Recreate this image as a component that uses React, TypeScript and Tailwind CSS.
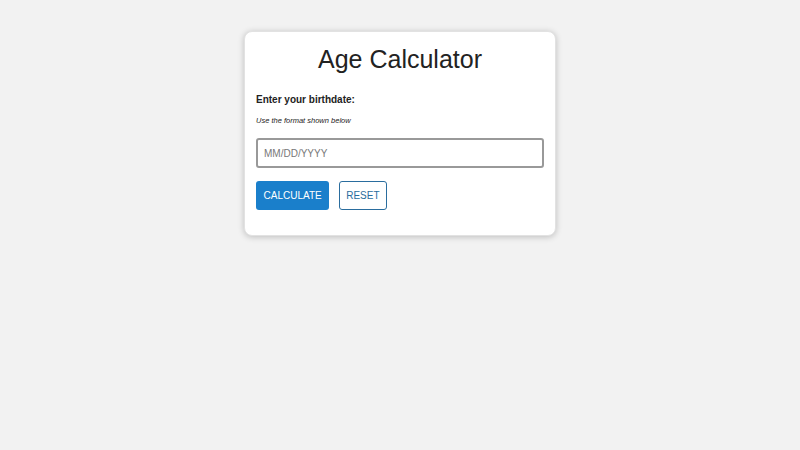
import { useState } from "react";

const App = () => {
  const [birthdate, setBirthdate] = useState("");

  return (
    <div className="min-h-[450px] w-full bg-[#f2f2f2] flex justify-center pt-[31px] font-['Liberation_Sans',Arial,sans-serif] text-[#222]">
      <div className="w-[312px] h-[205px] bg-white rounded-[8px] border border-[#e2e2e2] shadow-[0_1px_6px_rgba(0,0,0,0.22)] px-[11px] pt-[12px]">
        <h1 className="text-center text-[25px] leading-[30px]">Age Calculator</h1>
        <p className="mt-[20px] text-[10px] leading-[12px] font-bold">
          Enter your birthdate:
        </p>
        <p className="mt-[10px] text-[7.5px] leading-[9px] italic">
          Use the format shown below
        </p>
        <input
          type="text"
          value={birthdate}
          onChange={(e) => setBirthdate(e.target.value)}
          placeholder="MM/DD/YYYY"
          className="mt-[13px] block w-full h-[30px] px-[6px] text-[10px] border-2 border-[#999] rounded-[3px] outline-none placeholder:text-[#777]"
        />
        <div className="mt-[13px] flex gap-[10px]">
          <button className="h-[29px] px-[7.5px] bg-[#1a7fcb] text-white text-[10px] rounded-[3px]">
            CALCULATE
          </button>
          <button
            className="h-[29px] px-[6px] bg-white text-[#2a6d9e] text-[10px] border-[1.5px] border-[#2a6d9e] rounded-[3px]"
            onClick={() => setBirthdate("")}
          >
            RESET
          </button>
        </div>
      </div>
    </div>
  );
};

export default App;
